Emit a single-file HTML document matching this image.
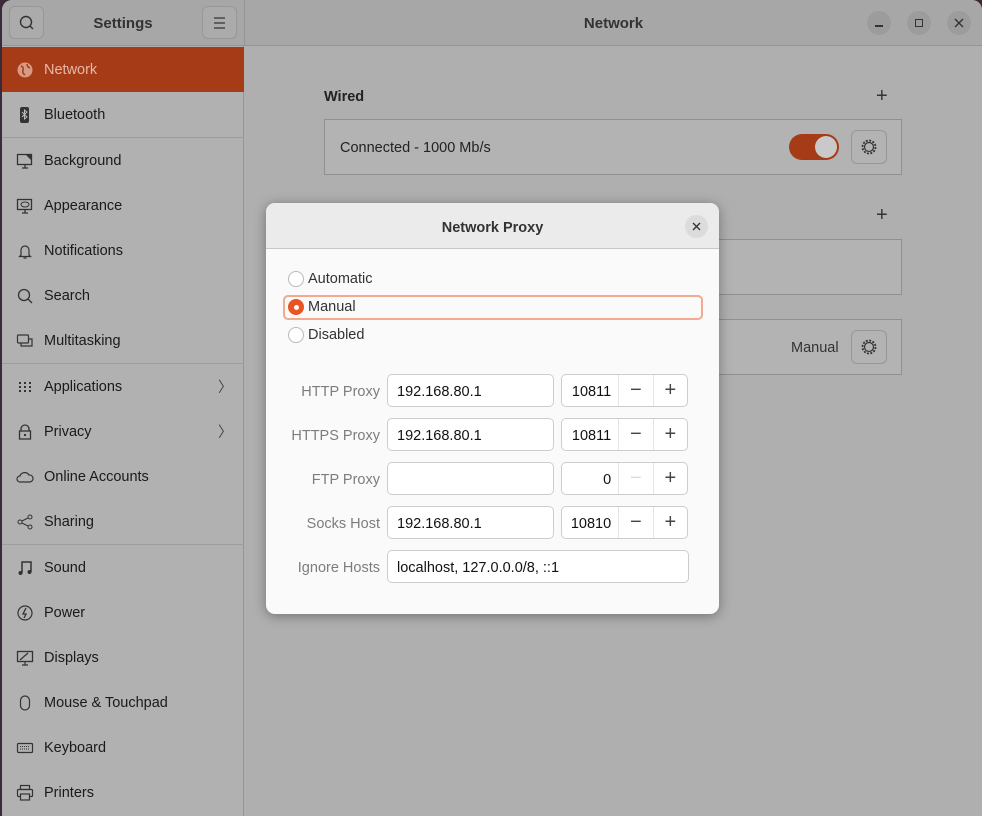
<!DOCTYPE html>
<html><head><style>
*{box-sizing:border-box;margin:0;padding:0}
body{width:982px;height:816px;overflow:hidden;background:#3a2a3a;font-family:"Liberation Sans",sans-serif;font-size:14.5px;color:#1a1a1a;position:relative}
.win{position:absolute;left:2px;top:0;width:980px;height:816px;background:#afafaf;border-radius:10px 10px 0 0;overflow:hidden}
.hdr{position:absolute;left:0;top:0;width:980px;height:46px;background:#a7a7a7;border-bottom:1px solid #959595}
.side{position:absolute;left:0;top:46px;width:242px;height:770px;background:#b1b1b1;border-right:1px solid #959595}
.vsep{position:absolute;left:242px;top:0;width:1px;height:46px;background:#959595}
.row{position:absolute;left:0;width:242px;height:45px;display:flex;align-items:center}
.row span{position:absolute;left:42px;top:15px}
.row svg{position:absolute;left:14px}
.sep{position:absolute;left:0;width:242px;height:1px;background:#9d9d9d}
.btn{position:absolute;width:35px;height:33px;border:1px solid #979797;border-radius:6px;background:#ababab}
.wc{position:absolute;top:11px;width:24px;height:24px;border-radius:50%;background:#9c9c9c}
.box{position:absolute;left:322px;width:578px;height:56px;border:1px solid #8f8f8f;background:#b3b3b3}
.dlg{position:absolute;left:266px;top:203px;width:453px;height:411px;background:#fafafa;border-radius:9px;overflow:hidden;box-shadow:0 2px 12px rgba(0,0,0,.35)}
.dh{height:46px;background:#ebebeb;border-bottom:1px solid #c8c8c8;text-align:center;line-height:50px;font-weight:bold;color:#333}
.radio{position:absolute;left:22px;width:16px;height:16px;border:1px solid #b8b8b8;border-radius:50%;background:#fff}
.rl{position:absolute;left:42px;color:#333}
.lbl{position:absolute;width:114px;text-align:right;color:#7d7d7d;left:0}
.tf{position:absolute;left:121px;width:167px;height:33px;border:1px solid #cdcdcd;border-radius:5px;background:#fff;padding-left:9px;line-height:35px;color:#111}
.sp{position:absolute;left:295px;width:127px;height:33px;border:1px solid #cdcdcd;border-radius:5px;background:#fff;display:flex}
.sp .n{width:57px;text-align:right;padding-right:7px;line-height:35px;color:#111}
.sp .b{width:35px;border-left:1px solid #e4e4e4;text-align:center;line-height:31px;font-size:20px;color:#444}
</style></head><body>
<div class="win">
<div class="hdr">
 <div class="btn" style="left:7px;top:6px"><svg width="35" height="33"><circle cx="16" cy="15" r="5.5" fill="none" stroke="#333" stroke-width="1.4"/><line x1="20" y1="19" x2="23" y2="22" stroke="#333" stroke-width="1.4"/></svg></div>
 <div style="position:absolute;left:0;width:242px;top:15px;text-align:center;font-weight:bold;color:#333;font-size:15px">Settings</div>
 <div class="btn" style="left:200px;top:6px"><svg width="35" height="33"><path d="M11 11h11M11 16h11M11 21h11" stroke="#333" stroke-width="1.3"/></svg></div>
 <div class="vsep"></div>
 <div style="position:absolute;left:243px;width:737px;top:15px;text-align:center;font-weight:bold;color:#333;font-size:15px">Network</div>
 <div class="wc" style="left:865px"><div style="position:absolute;left:8px;top:14px;width:8px;height:1.5px;background:#333"></div></div>
 <div class="wc" style="left:905px"><div style="position:absolute;left:8px;top:8px;width:8px;height:8px;border:1.4px solid #333"></div></div>
 <div class="wc" style="left:945px"><svg width="24" height="24"><path d="M8 8l8 8M16 8l-8 8" stroke="#333" stroke-width="1.4"/></svg></div>
</div>
<div class="side">
 <div class="row" style="top:1px;background:#a53b17;color:#e8b8a8"><svg width="18" height="18"><circle cx="9" cy="9" r="7.5" fill="#d89a85"/><path d="M5 5q3 1 2 4t2 5M11 3q0 3 3 4" stroke="#a53b17" stroke-width="1.5" fill="none"/></svg><span>Network</span></div>
 <div class="row" style="top:46px"><svg width="18" height="18"><rect x="4" y="1" width="9" height="16" rx="2" fill="#333"/><path d="M6 6l5 5-2.5 2V4L11 6 6 11" stroke="#bbb" fill="none"/></svg><span>Bluetooth</span></div>
 <div class="sep" style="top:91px"></div>
 <div class="row" style="top:92px"><svg width="18" height="18"><rect x="1.5" y="2.5" width="14" height="10" fill="none" stroke="#333" stroke-width="1.3"/><path d="M10 3h5v5z" fill="#333"/><path d="M6 16h6M9 13v3" stroke="#333" stroke-width="1.3"/></svg><span>Background</span></div>
 <div class="row" style="top:137px"><svg width="18" height="18"><rect x="1.5" y="2.5" width="14" height="10" fill="none" stroke="#333" stroke-width="1.3"/><ellipse cx="9" cy="7.5" rx="4" ry="2.5" fill="none" stroke="#333"/><path d="M6 16h6M9 13v3" stroke="#333" stroke-width="1.3"/></svg><span>Appearance</span></div>
 <div class="row" style="top:182px"><svg width="18" height="18"><path d="M5 13V8a4 4 0 0 1 8 0v5l1.5 1.5h-11z M7.5 16h3" fill="none" stroke="#333" stroke-width="1.2"/></svg><span>Notifications</span></div>
 <div class="row" style="top:227px"><svg width="18" height="18"><circle cx="8" cy="8" r="5.5" fill="none" stroke="#333" stroke-width="1.3"/><path d="M12 12l4 4" stroke="#333" stroke-width="1.3"/></svg><span>Search</span></div>
 <div class="row" style="top:272px"><svg width="18" height="18"><rect x="1.5" y="3" width="11" height="8" rx="1" fill="none" stroke="#333" stroke-width="1.2"/><path d="M5 11v3h11V7h-3" fill="none" stroke="#333" stroke-width="1.2"/></svg><span>Multitasking</span></div>
 <div class="sep" style="top:317px"></div>
 <div class="row" style="top:318px"><svg width="18" height="18" fill="#333"><rect x="3" y="4" width="2" height="2"/><rect x="8" y="4" width="2" height="2"/><rect x="13" y="4" width="2" height="2"/><rect x="3" y="8" width="2" height="2"/><rect x="8" y="8" width="2" height="2"/><rect x="13" y="8" width="2" height="2"/><rect x="3" y="12" width="2" height="2"/><rect x="8" y="12" width="2" height="2"/><rect x="13" y="12" width="2" height="2"/></svg><span>Applications</span><b style="position:absolute;left:216px;font-weight:normal;color:#444">〉</b></div>
 <div class="row" style="top:363px"><svg width="18" height="18"><path d="M5 8V6a4 4 0 0 1 8 0v2" fill="none" stroke="#333" stroke-width="1.3"/><rect x="3.5" y="8" width="11" height="8" fill="none" stroke="#333" stroke-width="1.3"/><rect x="8" y="11" width="2" height="2" fill="#333"/></svg><span>Privacy</span><b style="position:absolute;left:216px;font-weight:normal;color:#444">〉</b></div>
 <div class="row" style="top:408px"><svg width="18" height="18"><path d="M4 14a3 3 0 0 1 0-6 5 5 0 0 1 9-1 3.5 3.5 0 0 1 1 7z" fill="none" stroke="#333" stroke-width="1.2"/></svg><span>Online Accounts</span></div>
 <div class="row" style="top:453px"><svg width="18" height="18"><circle cx="4" cy="9" r="2" fill="none" stroke="#333"/><circle cx="14" cy="4" r="2" fill="none" stroke="#333"/><circle cx="14" cy="14" r="2" fill="none" stroke="#333"/><path d="M6 8l6-3M6 10l6 3" stroke="#333"/></svg><span>Sharing</span></div>
 <div class="sep" style="top:498px"></div>
 <div class="row" style="top:499px"><svg width="18" height="18"><path d="M6 14V3h9v10" fill="none" stroke="#333" stroke-width="1.5"/><circle cx="4.5" cy="14" r="2" fill="#333"/><circle cx="13.5" cy="13" r="2" fill="#333"/></svg><span>Sound</span></div>
 <div class="row" style="top:544px"><svg width="18" height="18"><circle cx="9" cy="9" r="7" fill="none" stroke="#333" stroke-width="1.2"/><path d="M10 4l-3 6h3l-2 4" fill="none" stroke="#333" stroke-width="1.3"/></svg><span>Power</span></div>
 <div class="row" style="top:589px"><svg width="18" height="18"><rect x="1.5" y="2.5" width="15" height="10" fill="none" stroke="#333" stroke-width="1.3"/><path d="M4 11l8-7M6 16h6M9 13v3" stroke="#333" stroke-width="1.2"/></svg><span>Displays</span></div>
 <div class="row" style="top:634px"><svg width="18" height="18"><rect x="4.5" y="2" width="9" height="14" rx="4.5" fill="none" stroke="#333" stroke-width="1.2"/></svg><span>Mouse &amp; Touchpad</span></div>
 <div class="row" style="top:679px"><svg width="18" height="18"><rect x="1.5" y="4.5" width="15" height="9" rx="1" fill="none" stroke="#333" stroke-width="1.2"/><path d="M4 7.5h10M4 10h10" stroke="#333" stroke-dasharray="1 1"/></svg><span>Keyboard</span></div>
 <div class="row" style="top:724px"><svg width="18" height="18"><rect x="4.5" y="1.5" width="9" height="4" fill="none" stroke="#333" stroke-width="1.2"/><rect x="1.5" y="5.5" width="15" height="7" rx="1" fill="none" stroke="#333" stroke-width="1.2"/><rect x="4.5" y="10" width="9" height="6" fill="#b1b1b1" stroke="#333" stroke-width="1.2"/></svg><span>Printers</span></div>
</div>
<div style="position:absolute;left:322px;top:89px;font-weight:bold;color:#222">Wired</div>
<div style="position:absolute;left:874px;top:85px;font-size:20px;color:#333">+</div>
<div style="position:absolute;left:874px;top:204px;font-size:20px;color:#333">+</div>
<div class="box" style="top:119px"><div style="position:absolute;left:15px;top:20px;color:#222">Connected - 1000 Mb/s</div>
 <div style="position:absolute;left:464px;top:14px;width:50px;height:26px;border-radius:13px;background:#a53b17"><div style="position:absolute;right:2px;top:2px;width:22px;height:22px;border-radius:50%;background:#c9c9c9"></div></div>
 <div class="btn" style="left:526px;top:10px;width:36px;height:34px;background:#b3b3b3"><svg width="34" height="32"><circle cx="17" cy="16" r="6.5" fill="none" stroke="#333" stroke-width="1.8" stroke-dasharray="2 1.4"/><circle cx="17" cy="16" r="4.5" fill="none" stroke="#333" stroke-width="1.2"/></svg></div>
</div>
<div class="box" style="top:239px"></div>
<div class="box" style="top:319px"><div style="position:absolute;left:466px;top:20px;color:#333">Manual</div>
 <div class="btn" style="left:526px;top:10px;width:36px;height:34px;background:#b3b3b3"><svg width="34" height="32"><circle cx="17" cy="16" r="6.5" fill="none" stroke="#333" stroke-width="1.8" stroke-dasharray="2 1.4"/><circle cx="17" cy="16" r="4.5" fill="none" stroke="#333" stroke-width="1.2"/></svg></div>
</div>
</div>
<div class="dlg">
 <div class="dh">Network Proxy</div>
 <div style="position:absolute;left:419px;top:12px;width:23px;height:23px;border-radius:50%;background:#dcdcdc"><svg width="23" height="23"><path d="M8 8l7 7M15 8l-7 7" stroke="#333" stroke-width="1.4"/></svg></div>
 <div class="radio" style="top:68px"></div><div class="rl" style="top:68px">Automatic</div>
 <div style="position:absolute;left:17px;top:92px;width:420px;height:25px;border:2px solid #f2a98e;border-radius:5px"></div>
 <div class="radio" style="top:96px;background:#e95420;border-color:#e95420"><div style="position:absolute;left:4.5px;top:4.5px;width:5px;height:5px;border-radius:50%;background:#fff"></div></div><div class="rl" style="top:96px">Manual</div>
 <div class="radio" style="top:124px"></div><div class="rl" style="top:124px">Disabled</div>

 <div class="lbl" style="top:181px">HTTP Proxy</div><div class="tf" style="top:171px">192.168.80.1</div>
 <div class="sp" style="top:171px"><div class="n">10811</div><div class="b">−</div><div class="b">+</div></div>
 <div class="lbl" style="top:225px">HTTPS Proxy</div><div class="tf" style="top:215px">192.168.80.1</div>
 <div class="sp" style="top:215px"><div class="n">10811</div><div class="b">−</div><div class="b">+</div></div>
 <div class="lbl" style="top:269px">FTP Proxy</div><div class="tf" style="top:259px"></div>
 <div class="sp" style="top:259px"><div class="n">0</div><div class="b" style="color:#ddd">−</div><div class="b">+</div></div>
 <div class="lbl" style="top:313px">Socks Host</div><div class="tf" style="top:303px">192.168.80.1</div>
 <div class="sp" style="top:303px"><div class="n">10810</div><div class="b">−</div><div class="b">+</div></div>
 <div class="lbl" style="top:357px">Ignore Hosts</div><div class="tf" style="top:347px;width:302px">localhost, 127.0.0.0/8, ::1</div>
</div>
</body></html>
